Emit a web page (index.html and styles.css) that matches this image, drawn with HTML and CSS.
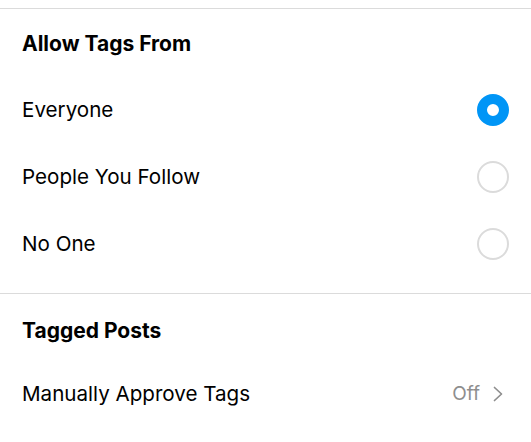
FILE: index.html
```html
<!DOCTYPE html>
<html>
<head>
<meta charset="utf-8">
<link rel="stylesheet" href="styles.css">
</head>
<body>
<div class="top-space"></div>
<div class="divider"></div>
<section class="section section-first">
  <h2 class="heading">Allow Tags From</h2>
  <div class="row">
    <span class="label">Everyone</span>
    <span class="radio radio-on"></span>
  </div>
  <div class="row">
    <span class="label">People You Follow</span>
    <span class="radio"></span>
  </div>
  <div class="row">
    <span class="label">No One</span>
    <span class="radio"></span>
  </div>
</section>
<div class="divider"></div>
<section class="section section-second">
  <h2 class="heading">Tagged Posts</h2>
  <div class="row">
    <span class="label">Manually Approve Tags</span>
    <span class="value">Off
      <svg class="chevron" width="10" height="16" viewBox="0 0 10 16"><path d="M1.5 1.5 L8.5 8 L1.5 14.5" fill="none" stroke="#8e8e8e" stroke-width="1.7" stroke-linecap="round" stroke-linejoin="round"/></svg>
    </span>
  </div>
</section>
</body>
</html>
```
FILE: styles.css
```css
html, body {
  margin: 0;
  padding: 0;
  background: #ffffff;
}
body {
  font-family: Inter, "Liberation Sans", sans-serif;
  color: #000000;
  width: 531px;
  height: 442px;
  overflow: hidden;
}
.top-space {
  height: 8px;
}
.divider {
  height: 1px;
  background: #dbdbdb;
}
.section {
  padding: 0 22px 0 22px;
}
.section-first {
  padding-top: 23px;
  padding-bottom: 16px;
}
.section-second {
  padding-top: 25px;
}
.heading {
  margin: 0;
  font-size: 21px;
  line-height: 24px;
  font-weight: 700;
}
.section-first .heading {
  margin-bottom: 20px;
}
.section-second .heading {
  margin-bottom: 17px;
}
.row {
  height: 67px;
  display: flex;
  align-items: center;
  justify-content: space-between;
}
.label {
  font-size: 20.6px;
  line-height: 24px;
}
.radio {
  width: 28px;
  height: 28px;
  border: 2px solid #dbdbdb;
  border-radius: 50%;
  box-sizing: content-box;
}
.radio-on {
  width: 12px;
  height: 12px;
  border: 10px solid #0095f6;
  background: #ffffff;
}
.value {
  display: flex;
  align-items: center;
  gap: 13px;
  font-size: 19px;
  color: #8e8e8e;
  margin-right: 6px;
}
.chevron {
  display: block;
}
```
